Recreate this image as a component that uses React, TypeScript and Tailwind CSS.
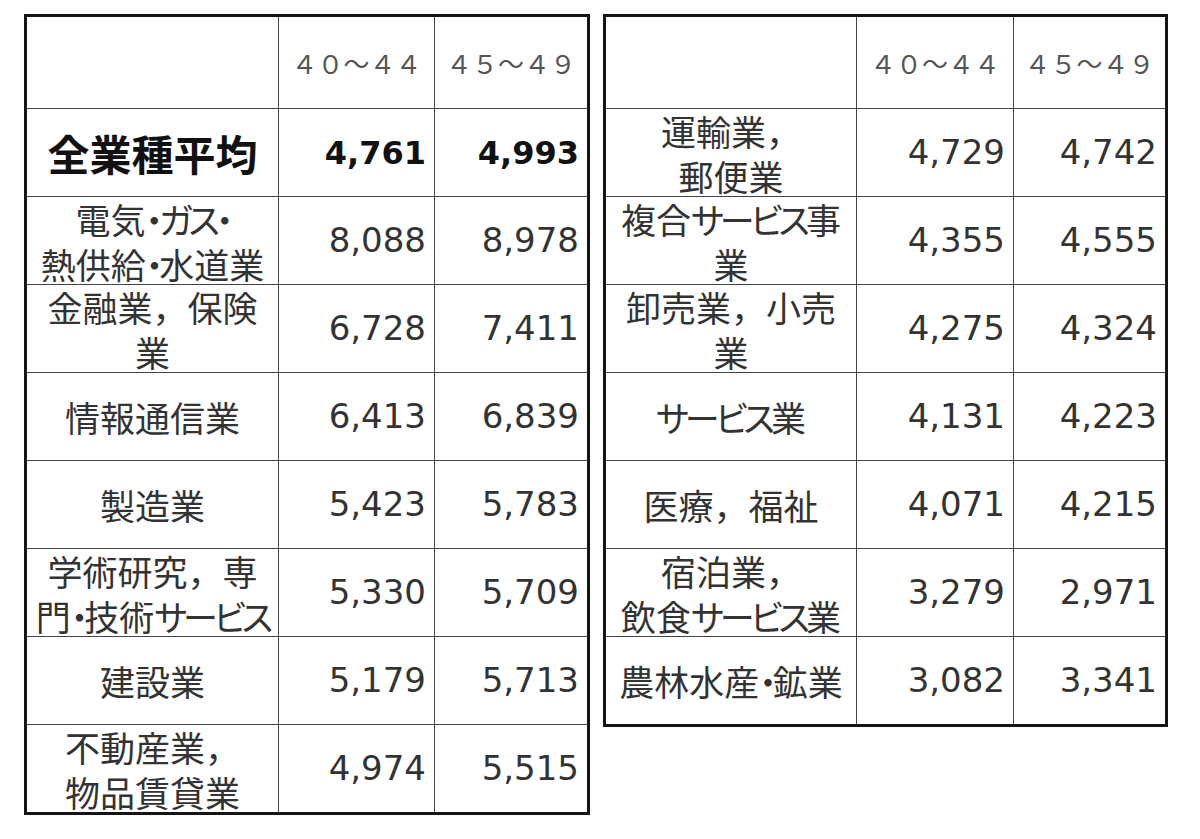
const left = [
  { label: ["全業種平均"], a: "4,761", b: "4,993", bold: true },
  { label: ["電気・ガス・", "熱供給・水道業"], a: "8,088", b: "8,978" },
  { label: ["金融業，保険", "業"], a: "6,728", b: "7,411" },
  { label: ["情報通信業"], a: "6,413", b: "6,839" },
  { label: ["製造業"], a: "5,423", b: "5,783" },
  { label: ["学術研究，専", "門・技術サービス"], a: "5,330", b: "5,709" },
  { label: ["建設業"], a: "5,179", b: "5,713" },
  { label: ["不動産業，", "物品賃貸業"], a: "4,974", b: "5,515" },
];

const right = [
  { label: ["運輸業，", "郵便業"], a: "4,729", b: "4,742" },
  { label: ["複合サービス事", "業"], a: "4,355", b: "4,555" },
  { label: ["卸売業，小売", "業"], a: "4,275", b: "4,324" },
  { label: ["サービス業"], a: "4,131", b: "4,223" },
  { label: ["医療，福祉"], a: "4,071", b: "4,215" },
  { label: ["宿泊業，", "飲食サービス業"], a: "3,279", b: "2,971" },
  { label: ["農林水産・鉱業"], a: "3,082", b: "3,341" },
];

type Row = { label: string[]; a: string; b: string; bold?: boolean };

const jp = "font-['Noto_Sans_CJK_JP',sans-serif] [font-feature-settings:'palt']";
const num = "font-['DejaVu_Sans',sans-serif] pr-[8px] flex items-center justify-end";

// katakana set a bit tighter, full-width comma keeps its full width
function Label({ text }: { text: string }) {
  const parts = text.split(/([\u30A0-\u30FF]+|，)/).filter(Boolean);
  return (
    <>
      {parts.map((p, i) =>
        p === "，" ? (
          <span key={i} className="[font-feature-settings:normal]">{p}</span>
        ) : /[\u30A0-\u30FF]/.test(p) ? (
          <span key={i} className="tracking-[-4px]">{p}</span>
        ) : (
          <span key={i}>{p}</span>
        )
      )}
    </>
  );
}

function Table({ rows, cols }: { rows: Row[]; cols: string }) {
  return (
    <div className="border-[3px] border-[#151515] bg-white">
      <div className={`grid ${cols} h-[91px]`}>
        <div />
        <div className="border-l border-[#444] flex items-center justify-center text-[26px] text-[#555] font-['Noto_Sans_CJK_JP',sans-serif]">
          ４０～４４
        </div>
        <div className="border-l border-[#444] flex items-center justify-center text-[26px] text-[#555] font-['Noto_Sans_CJK_JP',sans-serif]">
          ４５～４９
        </div>
      </div>
      {rows.map((r, i) => (
        <div key={i} className={`grid ${cols} h-[88px] border-t border-[#444]`}>
          <div className="flex flex-col items-center justify-center overflow-hidden">
            {r.label.map((l, j) => (
              <span
                key={j}
                className={`${jp} whitespace-nowrap ${
                  r.bold ? "text-[42px] font-bold text-[#111] leading-none" : "text-[35px] text-[#333] leading-[45px]"
                }`}
              >
                <Label text={l} />
              </span>
            ))}
          </div>
          <div className={`border-l border-[#444] ${num} ${r.bold ? "text-[32px] font-bold text-[#111]" : "text-[34px] text-[#333]"}`}>{r.a}</div>
          <div className={`border-l border-[#444] ${num} ${r.bold ? "text-[32px] font-bold text-[#111]" : "text-[34px] text-[#333]"}`}>{r.b}</div>
        </div>
      ))}
    </div>
  );
}

export default function App() {
  return (
    <div className="w-[1200px] h-[839px] bg-white overflow-hidden">
      <div className="flex items-start gap-[13px] pl-[24px] pt-[14px]">
        <Table rows={left} cols="grid-cols-[251px_156px_153px]" />
        <Table rows={right} cols="grid-cols-[250px_157px_152px]" />
      </div>
    </div>
  );
}
